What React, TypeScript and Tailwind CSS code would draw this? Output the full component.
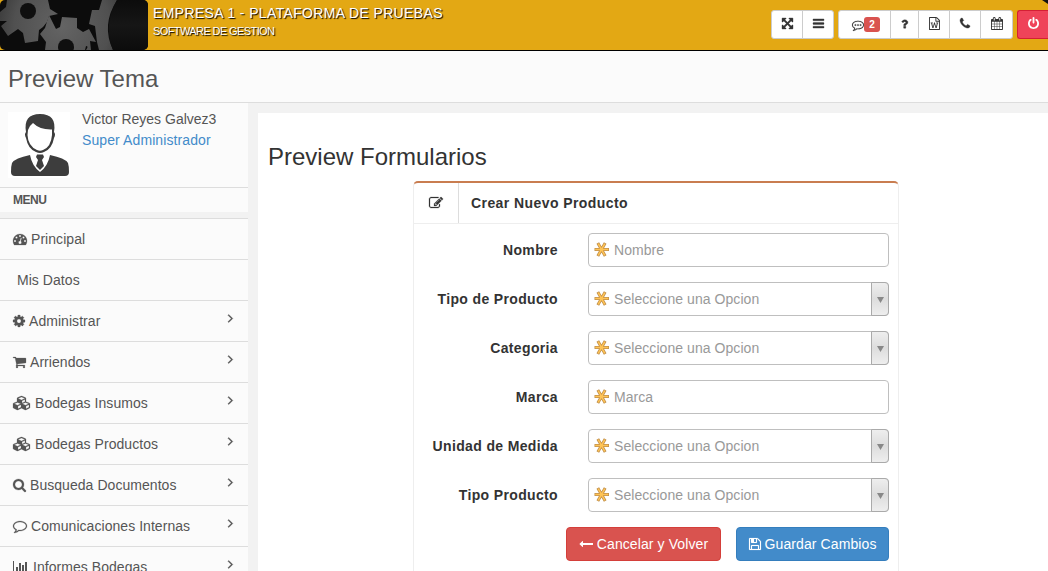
import React from "react";

type IconName = keyof typeof icons;

const icons = {
  arrows: { box: "128 128 1536 1536", w: 12, h: 12, d: "M1411 541l-355 355 355 355 144-144q29-31 70-14 39 17 39 59v448q0 26-19 45t-45 19h-448q-42 0-59-40-17-39 14-69l144-144-355-355-355 355 144 144q31 30 14 69-17 40-59 40h-448q-26 0-45-19t-19-45v-448q0-42 40-59 39-17 69 14l144 144 355-355-355-355-144 144q-19 19-45 19-12 0-24-5-40-17-40-59v-448q0-26 19-45t45-19h448q42 0 59 40 17 39-14 69l-144 144 355 355 355-355-144-144q-31-30-14-69 17-40 59-40h448q26 0 45 19t19 45v448q0 42-39 59-13 5-25 5-26 0-45-19z" },
  bars: { box: "128 0 1536 1792", w: 12, h: 14, d: "M1664 1344v128q0 26-19 45t-45 19h-1408q-26 0-45-19t-19-45v-128q0-26 19-45t45-19h1408q26 0 45 19t19 45zm0-512v128q0 26-19 45t-45 19h-1408q-26 0-45-19t-19-45v-128q0-26 19-45t45-19h1408q26 0 45 19t19 45zm0-512v128q0 26-19 45t-45 19h-1408q-26 0-45-19t-19-45v-128q0-26 19-45t45-19h1408q26 0 45 19t19 45z" },
  power: { box: "128 0 1536 1792", w: 12, h: 14, d: "M1664 896q0 156-61 298t-164 245-245 164-298 61-298-61-245-164-164-245-61-298q0-182 80.5-343t226.5-270q43-32 95.5-25t83.5 50q32 42 24.5 94.5t-49.5 84.5q-98 74-151.5 181t-53.5 228q0 104 40.5 198.5t109.5 163.5 163.5 109.5 198.5 40.5 198.5-40.5 163.5-109.5 109.5-163.5 40.5-198.5q0-121-53.5-228t-151.5-181q-42-32-49.5-84.5t24.5-94.5q31-43 84-50t95 25q146 109 226.5 270t80.5 343zm-640-768v640q0 52-38 90t-90 38-90-38-38-90v-640q0-52 38-90t90-38 90 38 38 90z" },
  angle: { box: "576 0 640 1792", w: 5, h: 14, d: "M1171 960q0 13-10 23l-466 466q-10 10-23 10t-23-10l-50-50q-10-10-10-23t10-23l393-393-393-393q-10-10-10-23t10-23l50-50q10-10 23-10t23 10l466 466q10 10 10 23z" },
  edit: { box: "0 0 1792 1792", w: 14, h: 14, d: "M888 1184l116-116-152-152-116 116v56h96v96h56zm440-720q-16-16-33 1l-350 350q-17 17-1 33t33-1l350-350q17-17 1-33zm80 594v190q0 119-84.5 203.5t-203.5 84.5h-832q-119 0-203.5-84.5t-84.5-203.5v-832q0-119 84.5-203.5t203.5-84.5h832q63 0 117 25 15 7 18 23 3 17-9 29l-49 49q-14 14-32 8-23-6-45-6h-832q-66 0-113 47t-47 113v832q0 66 47 113t113 47h832q66 0 113-47t47-113v-126q0-13 9-22l64-64q15-15 35-7t20 29zm-96-738l288 288-672 672h-288v-288zm444 132l-92 92-288-288 92-92q28-28 68-28t68 28l152 152q28 28 28 68t-28 68z" },
  back: { box: "0 0 1792 1792", w: 14, h: 14, d: "M1792 800v192q0 14-9 23t-23 9h-1248v224q0 21-19 29t-35-5l-384-350q-10-10-10-23 0-14 10-24l384-354q16-14 35-6 19 9 19 29v224h1248q14 0 23 9t9 23z" },
  save: { box: "128 0 1536 1792", w: 12, h: 14, d: "M512 1536h768v-384h-768v384zm896 0h128v-896q0-14-10-38.5t-20-34.5l-281-281q-10-10-34-20t-39-10v416q0 40-28 68t-68 28h-576q-40 0-68-28t-28-68v-416h-128v1280h128v-416q0-40 28-68t68-28h832q40 0 68 28t28 68v416zm-384-928v-320q0-13-9.5-22.5t-22.5-9.5h-192q-13 0-22.5 9.5t-9.5 22.5v320q0 13 9.5 22.5t22.5 9.5h192q13 0 22.5-9.5t9.5-22.5zm640 32v928q0 40-28 68t-68 28h-1344q-40 0-68-28t-28-68v-1344q0-40 28-68t68-28h928q40 0 88 20t76 48l280 280q28 28 48 76t20 88z" },
  search: { box: "64 0 1664 1792", w: 13, h: 14, d: "M1216 832q0-185-131.5-316.5t-316.5-131.5-316.5 131.5-131.5 316.5 131.5 316.5 316.5 131.5 316.5-131.5 131.5-316.5zm512 832q0 52-38 90t-90 38q-54 0-90-38l-343-342q-179 124-399 124-143 0-273.5-55.5t-225-150-150-225-55.5-273.5 55.5-273.5 150-225 225-150 273.5-55.5 273.5 55.5 225 150 150 225 55.5 273.5q0 220-124 399l343 343q37 37 37 90z" },
  cart: { box: "64 0 1664 1792", w: 13, h: 14, d: "M704 1536q0 52-38 90t-90 38-90-38-38-90 38-90 90-38 90 38 38 90zm896 0q0 52-38 90t-90 38-90-38-38-90 38-90 90-38 90 38 38 90zm128-1088v512q0 24-16.5 42.5t-40.5 21.5l-1044 122q13 60 13 70 0 16-24 64h920q26 0 45 19t19 45-19 45-45 19h-1024q-26 0-45-19t-19-45q0-11 8-31.5t16-36 21.5-40 15.5-29.5l-177-823h-204q-26 0-45-19t-19-45 19-45 45-19h256q16 0 28.5 6.5t19.5 15.5 13 24.5 8 26 5.5 29.5 4.5 26h1201q26 0 45 19t19 45z" },
  cog: { box: "128 0 1536 1792", w: 12, h: 14, d: "M1152 896q0-106-75-181t-181-75-181 75-75 181 75 181 181 75 181-75 75-181zm512-109v222q0 12-8 23t-20 13l-185 28q-19 54-39 91 35 50 107 138 10 12 10 25t-9 23q-27 37-99 108t-94 71q-12 0-26-9l-138-108q-44 23-91 38-16 136-29 186-7 28-36 28h-222q-14 0-24.5-8.5t-11.5-21.5l-28-184q-49-16-90-37l-141 107q-10 9-25 9-14 0-25-11-126-114-165-168-7-10-7-23 0-12 8-23 15-21 51-66.5t54-70.5q-27-50-41-99l-183-27q-13-2-21-12.5t-8-23.5v-222q0-12 8-23t19-13l186-28q14-46 39-92-40-57-107-138-10-12-10-24 0-10 9-23 26-36 98.5-107.5t94.5-71.5q13 0 26 10l138 107q44-23 91-38 16-136 29-186 7-28 36-28h222q14 0 24.5 8.5t11.5 21.5l28 184q49 16 90 37l142-107q9-9 24-9 13 0 25 10 129 119 165 170 7 8 7 22 0 12-8 23-15 21-51 66.5t-54 70.5q26 50 41 98l183 28q13 2 21 12.5t8 23.5z" },
  phone: { box: "192 0 1408 1792", w: 11, h: 14, d: "M1600 1240q0 27-10 70.5t-21 68.5q-21 50-122 106-94 51-186 51-27 0-52.5-3.5t-57.5-12.5-47.5-14.5-55.5-20.5-49-18q-98-35-175-83-128-79-264.5-215.5t-215.5-264.5q-48-77-83-175-3-9-18-49t-20.5-55.5-14.5-47.5-12.5-57.5-3.5-52.5q0-92 51-186 56-101 106-122 25-11 68.5-21t70.5-10q14 0 21 3 18 6 53 76 11 19 30 54t35 63.5 31 53.5q3 4 17.5 25t21.5 35.5 7 28.5q0 20-28.5 50t-62 55-62 53-28.5 46q0 9 5 22.5t8.5 20.5 14 24 11.5 19q76 137 174 235t235 174q2 1 19 11.5t24 14 20.5 8.5 22.5 5q18 0 46-28.5t53-62 55-62 50-28.5q14 0 28.5 7t35.5 21.5 25 17.5q25 15 53.5 31t63.5 35 54 30q70 35 76 53 3 7 3 21z" },
  question: { box: "384 0 1024 1792", w: 8, h: 14, d: "M1088 1256v240q0 16-12 28t-28 12h-240q-16 0-28-12t-12-28v-240q0-16 12-28t28-12h240q16 0 28 12t12 28zm316-600q0 54-15.5 101t-35 76.5-55 59.5-57.5 43.5-61 35.5q-41 23-68.5 65t-27.5 67q0 17-12 32.5t-28 15.5h-240q-15 0-25.5-18.5t-10.5-37.5v-45q0-83 65-156.5t143-108.5q59-27 84-56t25-76q0-42-46.5-74t-107.5-32q-65 0-108 29-35 25-107 115-13 16-31 16-12 0-25-8l-164-125q-13-10-15.5-25t5.5-28q160-266 464-266 80 0 161 31t146 83 106 127.5 41 158.5z" },
  calendar: { box: "64 0 1664 1792", w: 13, h: 14, d: "M192 1664h288v-288h-288v288zm352 0h320v-288h-320v288zm-352-352h288v-320h-288v320zm352 0h320v-320h-320v320zm-352-384h288v-288h-288v288zm736 736h320v-288h-320v288zm-384-736h320v-288h-320v288zm768 736h288v-288h-288v288zm-384-352h320v-320h-320v320zm-352-864v-288q0-13-9.5-22.5t-22.5-9.5h-64q-13 0-22.5 9.5t-9.5 22.5v288q0 13 9.5 22.5t22.5 9.5h64q13 0 22.5-9.5t9.5-22.5zm736 864h288v-320h-288v320zm-384-384h320v-288h-320v288zm384 0h288v-288h-288v288zm32-480v-288q0-13-9.5-22.5t-22.5-9.5h-64q-13 0-22.5 9.5t-9.5 22.5v288q0 13 9.5 22.5t22.5 9.5h64q13 0 22.5-9.5t9.5-22.5zm384-64v1280q0 52-38 90t-90 38h-1408q-52 0-90-38t-38-90v-1280q0-52 38-90t90-38h128v-96q0-66 47-113t113-47h64q66 0 113 47t47 113v96h384v-96q0-66 47-113t113-47h64q66 0 113 47t47 113v96h128q52 0 90 38t38 90z" },
  comment: { box: "0 0 1792 1792", w: 14, h: 14, d: "M896 384q-204 0-381.5 69.5t-282 187.5-104.5 255q0 112 71.5 213.5t201.5 175.5l87 50-27 96q-24 91-70 172 152-63 275-171l43-38 57 6q69 8 130 8 204 0 381.5-69.5t282-187.5 104.5-255-104.5-255-282-187.5-381.5-69.5zm896 512q0 174-120 321.5t-326 233-450 85.5q-70 0-145-8-198 175-460 242-49 14-114 22h-5q-15 0-27-10.5t-16-27.5v-1q-3-4-.5-12t2-10 4.5-9.5l6-9 7-8.5 8-9q7-8 31-34.5t34.5-38 31-39.5 32.5-51 27-59 26-76q-157-89-247.5-220t-90.5-281q0-174 120-321.5t326-233 450-85.5 450 85.5 326 233 120 321.5z" },
  commenting: { box: "0 0 1792 1792", w: 12, h: 12, d: "M640 896a128 128 0 1 1-256 0a128 128 0 1 1 256 0zM1024 896a128 128 0 1 1-256 0a128 128 0 1 1 256 0zM1408 896a128 128 0 1 1-256 0a128 128 0 1 1 256 0zM896 384q-204 0-381.5 69.5t-282 187.5-104.5 255q0 112 71.5 213.5t201.5 175.5l87 50-27 96q-24 91-70 172 152-63 275-171l43-38 57 6q69 8 130 8 204 0 381.5-69.5t282-187.5 104.5-255-104.5-255-282-187.5-381.5-69.5zm896 512q0 174-120 321.5t-326 233-450 85.5q-70 0-145-8-198 175-460 242-49 14-114 22h-5q-15 0-27-10.5t-16-27.5v-1q-3-4-.5-12t2-10 4.5-9.5l6-9 7-8.5 8-9q7-8 31-34.5t34.5-38 31-39.5 32.5-51 27-59 26-76q-157-89-247.5-220t-90.5-281q0-174 120-321.5t326-233 450-85.5 450 85.5 326 233 120 321.5z" },
  chart: { box: "0 0 2048 1792", w: 16, h: 14, d: "M640 896v512h-256v-512h256zm384-512v1024h-256v-1024h256zm1024 1152v128h-2048v-1536h128v1408h1920zm-640-896v768h-256v-768h256zm384-384v1152h-256v-1152h256z" },
  gauge: { box: "0 0 1792 1792", w: 14, h: 14, d: "M384 1152q0-53-37.5-90.5t-90.5-37.5-90.5 37.5-37.5 90.5 37.5 90.5 90.5 37.5 90.5-37.5 37.5-90.5zm192-448q0-53-37.5-90.5t-90.5-37.5-90.5 37.5-37.5 90.5 37.5 90.5 90.5 37.5 90.5-37.5 37.5-90.5zm428 481l101-382q6-26-7.5-48.5t-38.5-29.5-48 6.5-30 39.5l-101 382q-60 5-107 43.5t-63 98.5q-20 77 20 146t117 89 146-20 89-117q16-60-6-117t-72-91zm660-33q0-53-37.5-90.5t-90.5-37.5-90.5 37.5-37.5 90.5 37.5 90.5 90.5 37.5 90.5-37.5 37.5-90.5zm-640-640q0-53-37.5-90.5t-90.5-37.5-90.5 37.5-37.5 90.5 37.5 90.5 90.5 37.5 90.5-37.5 37.5-90.5zm448 192q0-53-37.5-90.5t-90.5-37.5-90.5 37.5-37.5 90.5 37.5 90.5 90.5 37.5 90.5-37.5 37.5-90.5zm320 448q0 261-141 483-19 29-54 29h-1402q-35 0-54-29-141-221-141-483 0-182 71-348t191-286 286-191 348-71 348 71 286 191 191 286 71 348z" },
  cubes: { box: "0 0 2304 1792", w: 18, h: 14, d: "M640 1632l384-192v-314l-384 164v342zm-64-454l404-173-404-173-404 173zm1088 454l384-192v-314l-384 164v342zm-64-454l404-173-404-173-404 173zm-448-293l384-165v-266l-384 164v267zm-64-379l441-189-441-189-441 189zm1088 518v416q0 36-19 67t-52 47l-448 224q-25 14-57 14t-57-14l-448-224q-4-2-7-4-2 2-7 4l-448 224q-25 14-57 14t-57-14l-448-224q-33-16-52-47t-19-67v-416q0-38 21.5-70t56.5-48l434-186v-400q0-38 21.5-70t56.5-48l448-192q23-10 50-10t50 10l448 192q35 16 56.5 48t21.5 70v400l434 186q36 16 57 48t21 70z" },
  word: { box: "128 0 1536 1792", w: 11, h: 13, d: "M1596 380q28 28 48 76t20 88v1152q0 40-28 68t-68 28h-1344q-40 0-68-28t-28-68v-1600q0-40 28-68t68-28h896q40 0 88 20t76 48zm-444-244v376h376q-10-29-22-41l-313-313q-12-12-41-22zm384 1528v-1024h-416q-40 0-68-28t-28-68v-416h-768v1536h1280zM361 768v107h70l164 661h159l128-485q7-20 10-46 2-16 2-24h4l3 24q1 3 3.5 20t5.5 26l128 485h159l164-661h70v-107h-300v107h90l-99 438q-5 20-7 46l-2 21h-4l-3-21q-1-5-4-21t-5-25l-144-545h-114l-144 545q-2 9-4.5 24.5t-3.5 21.5l-4 21h-4l-2-21q-2-26-7-46l-99-438h90v-107h-300z" },
};

function Icon({ name, w, h, className = "", bold = 50 }: { name: IconName; w?: number; h?: number; className?: string; bold?: number }) {
  const icon = icons[name];
  return (
    <svg viewBox={icon.box} width={w ?? icon.w} height={h ?? icon.h} fill="currentColor" stroke="currentColor" strokeWidth={bold} className={`shrink-0 overflow-visible ${className}`} aria-hidden="true">
      <path d={icon.d} />
    </svg>
  );
}

function Gears() {
  return (
    <svg width="148" height="50" viewBox="0 0 148 50" className="shrink-0 rounded-[5px]" aria-hidden="true">
      <defs>
        <radialGradient id="metal" gradientUnits="userSpaceOnUse" cx="62" cy="26" r="80">
          <stop offset="0" stopColor="#646464" />
          <stop offset="0.6" stopColor="#505050" />
          <stop offset="1" stopColor="#2c2c2c" />
        </radialGradient>
        <linearGradient id="disc" x1="0" x2="0" y1="0" y2="1">
          <stop offset="0" stopColor="#0c0c0c" />
          <stop offset="0.5" stopColor="#161616" />
          <stop offset="1" stopColor="#0c0c0c" />
        </linearGradient>
      </defs>
      <rect width="148" height="50" fill="#0c0c0c" />
      <path fill="url(#metal)" d="M7 0H48L50 9L58 14L49 16L47 22L43 27L39 30L38 41L25 43L23 33L18 29L8 36L1 26L7 21L0 21V12L6 7Z" />
      <circle cx="28" cy="11" r="8" fill="#0f0f0f" />
      <path fill="url(#metal)" d="M40 34L45 28L49 15L56 29L60 27L62 17L77 18V28L83 32L89 29L96 42L90 41L91 50H86Q89 46 86 46L85 50H45L46 42Z" />
      <circle cx="66" cy="47" r="8" fill="#0f0f0f" />
      <path fill="url(#metal)" d="M102 0H117Q101 25 113 50H99L97 42L95 26L89 24L92 10L99 10Z" />
      <path fill="url(#disc)" d="M117 0H148V50H113Q103 25 117 0Z" />
    </svg>
  );
}

function Avatar() {
  return (
    <svg width="62" height="66" viewBox="0 0 62 66" className="shrink-0 bg-white" aria-hidden="true">
      <path fill="#3d3d3d" d="M18 20Q15 2 32 2Q49 2 46 20Q48 22 46 26Q44 37 36 40Q32 42 28 40Q20 37 18 26Q16 22 18 20Z" />
      <path fill="#fff" d="M20 18Q22 13 25 11Q32 18 44 17.500V23Q43 35 35 38Q32 39.500 29 38Q20 34 19.500 23Z" />
      <path fill="#3d3d3d" d="M22 43Q24 54 32 60Q40 54 42 43Q57 46 60 51Q61 54 61 60Q61 64 57 64H7Q3 64 3 60Q3 54 4 51Q7 46 22 43Z" />
      <path fill="#3d3d3d" d="M29 42.500H35L36 45L34 48L36 54L32 58L28 54L30 48L28 45Z" />
    </svg>
  );
}

function Star() {
  return (
    <svg width="16" height="16" viewBox="0 0 16 16" className="shrink-0" aria-hidden="true">
      <path stroke="#c08f4c" strokeWidth="3" d="M0.500 7.500H15M3.800 1L11.200 14M11.200 1L3.800 14" />
      <path stroke="#ffc455" strokeWidth="1.500" d="M1.200 7.500H14.300M4.200 1.700L10.800 13.300M10.800 1.700L4.200 13.300" />
    </svg>
  );
}

const menu: { label: string; icon?: IconName; arrow?: boolean }[] = [
  { label: "Principal", icon: "gauge" },
  { label: "Mis Datos" },
  { label: "Administrar", icon: "cog", arrow: true },
  { label: "Arriendos", icon: "cart", arrow: true },
  { label: "Bodegas Insumos", icon: "cubes", arrow: true },
  { label: "Bodegas Productos", icon: "cubes", arrow: true },
  { label: "Busqueda Documentos", icon: "search", arrow: true },
  { label: "Comunicaciones Internas", icon: "comment", arrow: true },
  { label: "Informes Bodegas", icon: "chart", arrow: true },
];

const fields = [
  { label: "Nombre", text: "Nombre" },
  { label: "Tipo de Producto", text: "Seleccione una Opcion", select: true },
  { label: "Categoria", text: "Seleccione una Opcion", select: true },
  { label: "Marca", text: "Marca" },
  { label: "Unidad de Medida", text: "Seleccione una Opcion", select: true },
  { label: "Tipo Producto", text: "Seleccione una Opcion", select: true },
];

const toolButton = "flex items-center justify-center border-[#ccc] border-r last:border-r-0";

function Header() {
  return (
    <header className="relative flex h-[51px] shrink-0 border-b border-black bg-[#e3a814]">
      <Gears />
      <div className="flex-1 pl-[5px] pt-1 text-white [text-shadow:1px_1px_1px_#000]">
        <div className="text-[14px] leading-[18px] tracking-[0.36px]">EMPRESA 1 - PLATAFORMA DE PRUEBAS</div>
        <div className="text-[11px] leading-[18px] tracking-[-0.6px]">SOFTWARE DE GESTION</div>
      </div>
      <div className="flex pt-[10px] text-[#333]">
        <div className="mr-1 flex h-[29px] w-[63px] rounded-[3px] border border-[#ccc] bg-white">
          <button className={`${toolButton} w-[31px] pb-[2px]`}><Icon name="arrows" w={11} h={11} /></button>
          <button className={`${toolButton} flex-1 pb-[2px]`}><Icon name="bars" w={11} h={13} /></button>
        </div>
        <div className="mr-1 flex h-[29px] w-[175px] rounded-[3px] border border-[#ccc] bg-white">
          <button className={`${toolButton} w-[52px] pl-[3px]`}>
            <Icon name="commenting" bold={20} />
            <span className="-mt-px h-[15px] w-4 rounded-[3px] bg-[#d9534f] text-center text-[10px] font-bold leading-[15px] text-white">2</span>
          </button>
          <button className={`${toolButton} w-7 pb-[2px]`}><Icon name="question" w={7} h={12} /></button>
          <button className={`${toolButton} w-[31px] pb-[2px]`}><Icon name="word" bold={0} /></button>
          <button className={`${toolButton} w-[31px] pb-[2px]`}><Icon name="phone" w={10} h={13} /></button>
          <button className={`${toolButton} flex-1 pb-[2px]`}><Icon name="calendar" w={12} h={13} bold={0} /></button>
        </div>
        <button className="flex h-[29px] w-[31px] items-center justify-center rounded-l-[3px] border border-r-0 border-[#d41f35] bg-[#ef4359] pb-[2px] text-white">
          <Icon name="power" w={11} h={13} bold={0} />
        </button>
      </div>
      <svg width="6" height="4" viewBox="0 0 6 4" className="absolute right-0 top-0" aria-hidden="true">
        <path d="M0 0H6V4Z" fill="#111" />
      </svg>
    </header>
  );
}

function Sidebar() {
  return (
    <aside className="w-[248px] shrink-0">
      <div className="flex h-[84px] bg-[#fbfbfb] pl-2 pt-[9px]">
        <Avatar />
        <div className="-mt-[3px] ml-3 text-[14px] leading-[21px]">
          <div>Victor Reyes Galvez3</div>
          <div className="tracking-[0.1px] text-[#428bca]">Super Administrador</div>
        </div>
      </div>
      <div className="h-[25px] border-t border-[#ddd] bg-[#fbfbfb] pl-[13px] text-[12px] font-bold leading-[24px] tracking-[-0.5px]">MENU</div>
      <nav className="mt-[6px]">
        {menu.map((item) => (
          <a key={item.label} className="flex h-[41px] items-center border-t border-[#ddd] bg-[#fbfbfb] pl-[13px] pr-[15px] text-[14px] tracking-[0.05px]">
            {item.icon && <Icon name={item.icon} bold={item.icon === "chart" ? 0 : 30} />}
            <span className="ml-1 flex-1 leading-5">{item.label}</span>
            {item.arrow && <Icon name="angle" w={5} h={14} className="-mt-[6px]" bold={60} />}
          </a>
        ))}
      </nav>
    </aside>
  );
}

function Form() {
  return (
    <section className="ml-[155px] w-[486px] flex-1 rounded-t-[5px] border border-b-0 border-t-2 border-[#eee] border-t-[#c97d50]">
      <div className="flex h-[41px] items-center border-b border-[#eee] text-[14px] font-bold tracking-[0.42px]">
        <span className="flex h-full w-[45px] items-center justify-center border-r border-[#ddd]"><Icon name="edit" bold={30} /></span>
        <h3 className="pl-3">Crear Nuevo Producto</h3>
      </div>
      <div className="flex flex-col gap-[15px] pr-[9px] pt-[9px]">
        {fields.map((field) => (
          <div key={field.label} className="flex h-[34px] items-center text-[14px]">
            <label className="flex-1 pr-[30px] text-right font-bold tracking-[0.35px]">{field.label}</label>
            <div className="flex h-full w-[301px] items-center rounded-[4px] border border-[#bfbfbf] pl-[5px] tracking-[0.06px] text-[#999]">
              <Star />
              <span className="ml-1 flex-1">{field.text}</span>
              {field.select && (
                <span className="-my-px -mr-px flex h-[34px] w-[18px] items-center justify-center rounded-r-[4px] border border-[#aaa] bg-linear-to-b from-[#eee] via-[#ddd] to-[#eee] pt-px">
                  <svg width="7" height="6" viewBox="0 0 7 6" aria-hidden="true"><path d="M0 0H7L3.500 6Z" fill="#888" /></svg>
                </span>
              )}
            </div>
          </div>
        ))}
      </div>
      <div className="flex justify-end gap-[15px] pr-[9px] pt-[15px] text-[14px] tracking-[0.1px] text-white">
        <button className="flex h-[34px] w-[155px] items-center justify-center gap-1 rounded-[4px] border border-[#d43f3a] bg-[#d9534f]"><Icon name="back" bold={0} />Cancelar y Volver</button>
        <button className="flex h-[34px] w-[153px] items-center justify-center gap-[4px] rounded-[4px] border border-[#357ebd] bg-[#428bca]"><Icon name="save" bold={20} />Guardar Cambios</button>
      </div>
    </section>
  );
}

export default function App() {
  return (
    <div className="flex h-[571px] w-[1048px] flex-col overflow-hidden bg-[#f2f2f2] font-['Liberation_Sans',Arial,sans-serif] text-[#555]">
      <Header />
      <div className="h-[52px] shrink-0 border-b border-[#ddd] bg-[#fbfbfb] pl-2 pt-3">
        <h1 className="text-[24px] leading-8">Preview Tema</h1>
      </div>
      <div className="flex min-h-0 flex-1">
        <Sidebar />
        <main className="ml-[10px] mt-[10px] flex flex-1 flex-col bg-white pt-7 text-[#333]">
          <h2 className="h-[40px] shrink-0 pl-[10px] text-[24px] leading-8">Preview Formularios</h2>
          <Form />
        </main>
      </div>
    </div>
  );
}
